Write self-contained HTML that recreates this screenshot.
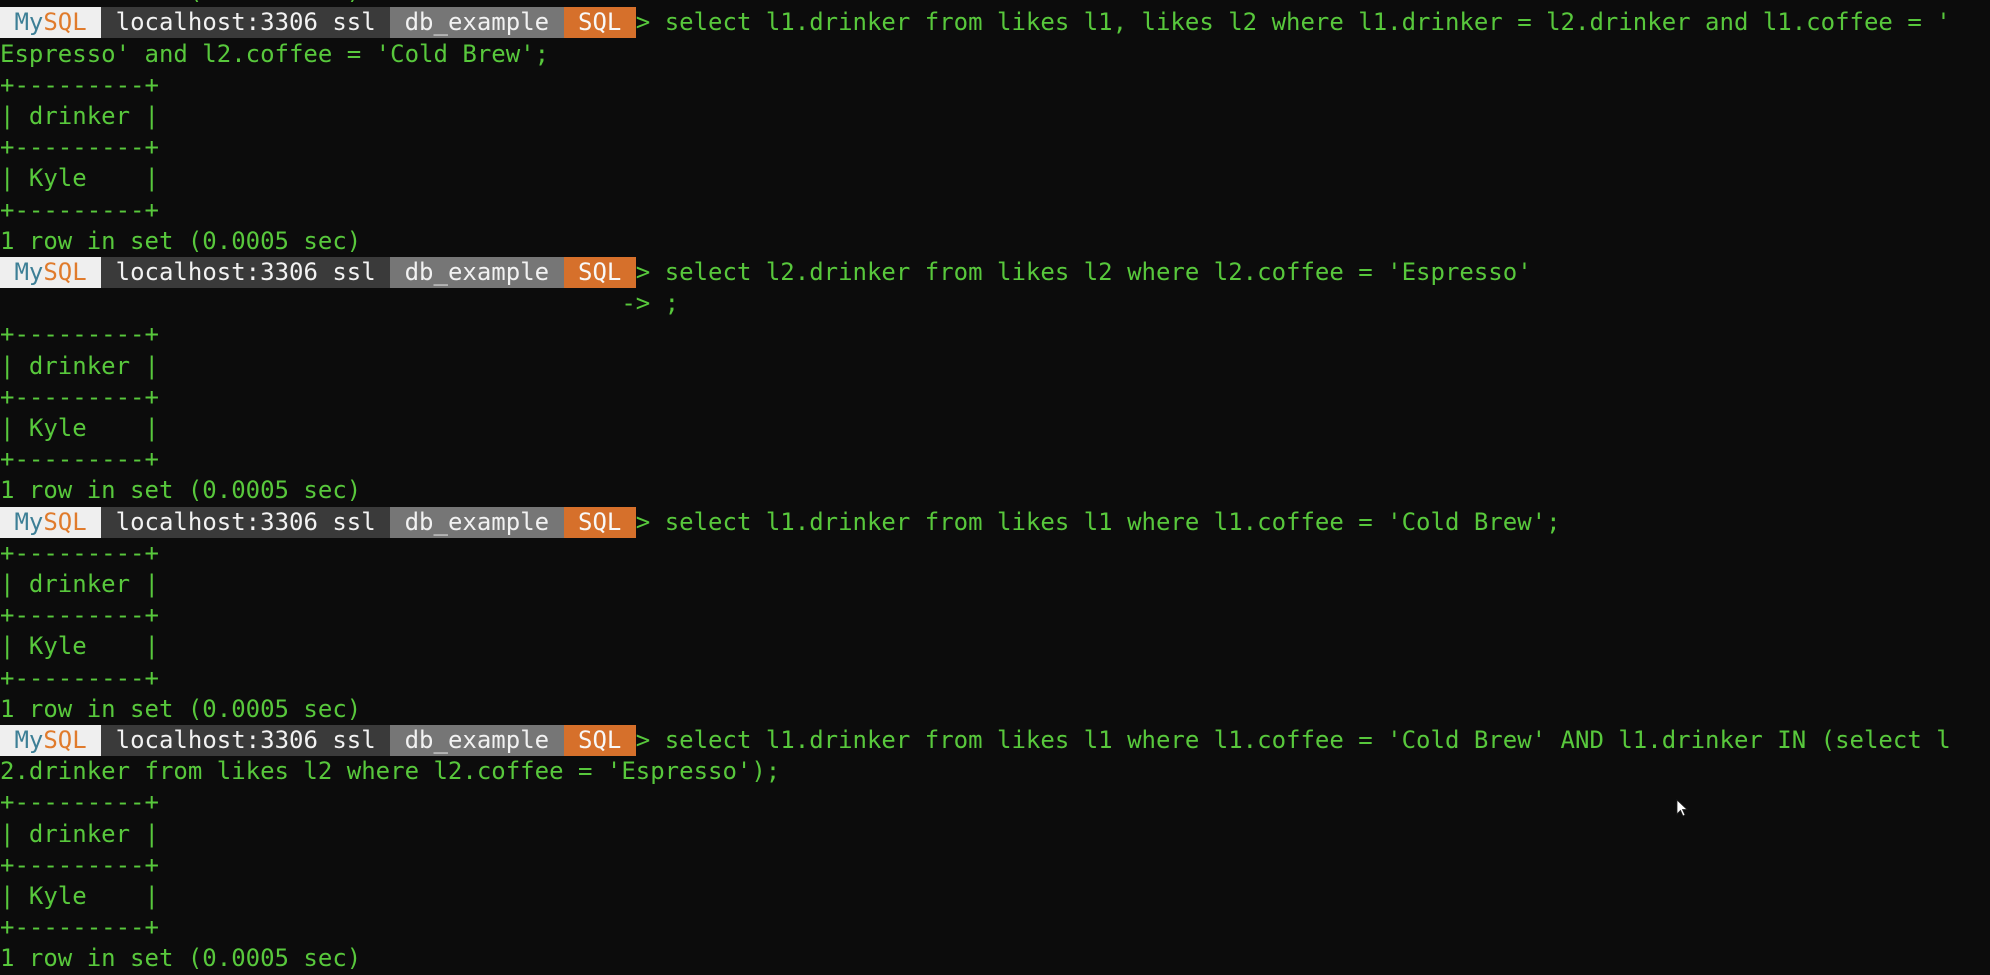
<!DOCTYPE html>
<html><head><meta charset="utf-8"><style>
html,body{margin:0;padding:0;background:#0c0c0c;width:1990px;height:974px;overflow:hidden}
.l{position:absolute;left:0;height:31.2px;line-height:31.2px;white-space:pre;font-family:"DejaVu Sans Mono","Liberation Mono",monospace;font-size:24px;color:#58c83c}
.s{display:inline-block;height:31px;line-height:31px;vertical-align:top}
.a{background:#efefef}.a .m{color:#3d7f96}.a .q{color:#e07b2c}
.b{background:#3a3a3a;color:#f2f2f2}
.c{background:#767676;color:#f2f2f2}
.d{background:#d6702b;color:#f8f8f8}
</style></head><body>
<div class="l" style="top:-23.8px">1 row in set (0.0005 sec)</div>
<div class="l" style="top:7.4px"><span class="s a"> <span class="m">My</span><span class="q">SQL</span> </span><span class="s b"> localhost:3306 ssl </span><span class="s c"> db_example </span><span class="s d"> SQL </span>&gt; select l1.drinker from likes l1, likes l2 where l1.drinker = l2.drinker and l1.coffee = '</div>
<div class="l" style="top:38.6px">Espresso' and l2.coffee = 'Cold Brew';</div>
<div class="l" style="top:69.8px">+---------+</div>
<div class="l" style="top:101px">| drinker |</div>
<div class="l" style="top:132.2px">+---------+</div>
<div class="l" style="top:163.4px">| Kyle    |</div>
<div class="l" style="top:194.6px">+---------+</div>
<div class="l" style="top:225.8px">1 row in set (0.0005 sec)</div>
<div class="l" style="top:257px"><span class="s a"> <span class="m">My</span><span class="q">SQL</span> </span><span class="s b"> localhost:3306 ssl </span><span class="s c"> db_example </span><span class="s d"> SQL </span>&gt; select l2.drinker from likes l2 where l2.coffee = 'Espresso'</div>
<div class="l" style="top:288.2px">                                           -&gt; ;</div>
<div class="l" style="top:319.4px">+---------+</div>
<div class="l" style="top:350.6px">| drinker |</div>
<div class="l" style="top:381.8px">+---------+</div>
<div class="l" style="top:413px">| Kyle    |</div>
<div class="l" style="top:444.2px">+---------+</div>
<div class="l" style="top:475.4px">1 row in set (0.0005 sec)</div>
<div class="l" style="top:506.6px"><span class="s a"> <span class="m">My</span><span class="q">SQL</span> </span><span class="s b"> localhost:3306 ssl </span><span class="s c"> db_example </span><span class="s d"> SQL </span>&gt; select l1.drinker from likes l1 where l1.coffee = 'Cold Brew';</div>
<div class="l" style="top:537.8px">+---------+</div>
<div class="l" style="top:569px">| drinker |</div>
<div class="l" style="top:600.2px">+---------+</div>
<div class="l" style="top:631.4px">| Kyle    |</div>
<div class="l" style="top:662.6px">+---------+</div>
<div class="l" style="top:693.8px">1 row in set (0.0005 sec)</div>
<div class="l" style="top:725px"><span class="s a"> <span class="m">My</span><span class="q">SQL</span> </span><span class="s b"> localhost:3306 ssl </span><span class="s c"> db_example </span><span class="s d"> SQL </span>&gt; select l1.drinker from likes l1 where l1.coffee = 'Cold Brew' AND l1.drinker IN (select l</div>
<div class="l" style="top:756.2px">2.drinker from likes l2 where l2.coffee = 'Espresso');</div>
<div class="l" style="top:787.4px">+---------+</div>
<div class="l" style="top:818.6px">| drinker |</div>
<div class="l" style="top:849.8px">+---------+</div>
<div class="l" style="top:881px">| Kyle    |</div>
<div class="l" style="top:912.2px">+---------+</div>
<div class="l" style="top:943.4px">1 row in set (0.0005 sec)</div>
<svg style="position:absolute;left:1676px;top:799px" width="14" height="20" viewBox="0 0 14 20"><path d="M1 1 L1 15 L4.5 11.5 L7 17 L9 16 L6.5 10.5 L11 10.5 Z" fill="#fff" stroke="#222" stroke-width="0.8"/></svg>
</body></html>
